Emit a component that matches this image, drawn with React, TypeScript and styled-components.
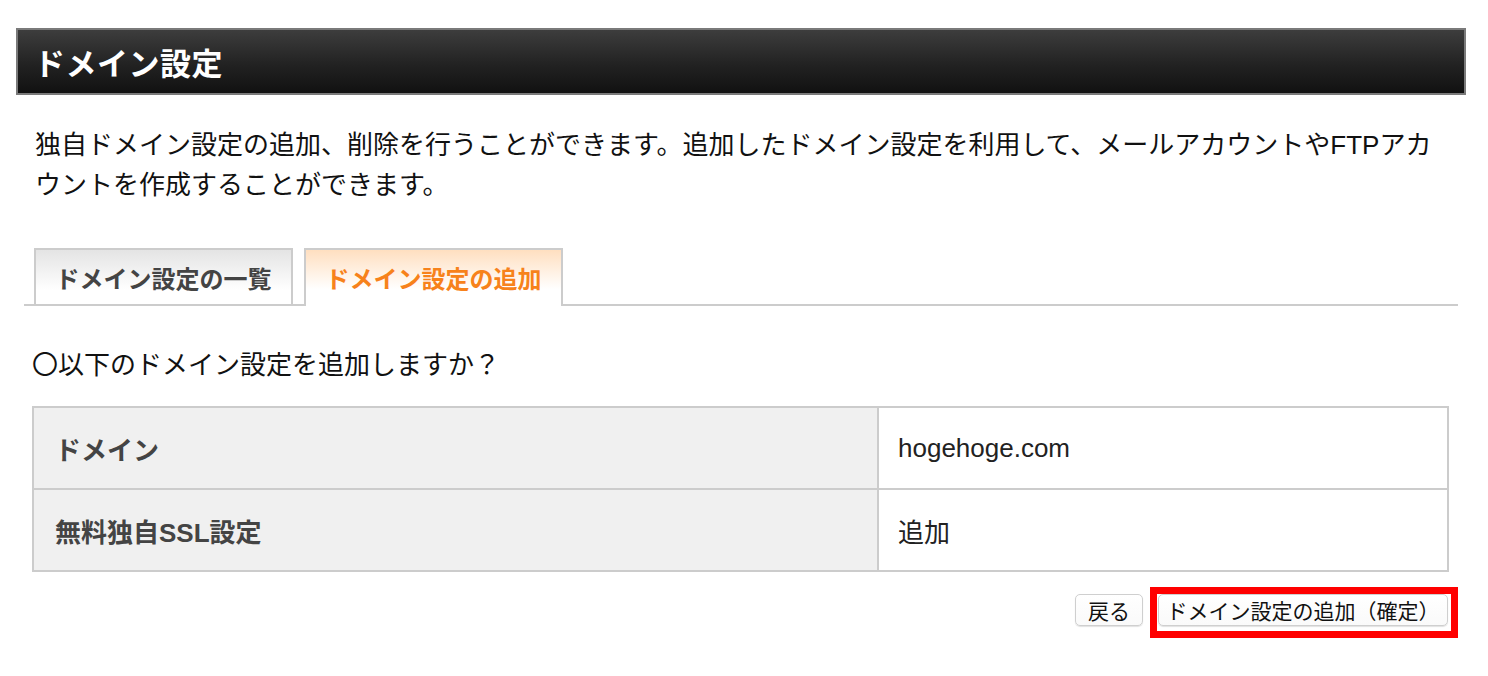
import React from 'react';
import styled, { createGlobalStyle } from 'styled-components';

const GlobalStyle = createGlobalStyle`
  html, body {
    margin: 0;
    padding: 0;
    background: #fff;
  }
  body {
    font-family: "Liberation Sans", "Noto Sans CJK JP", sans-serif;
    color: #111;
  }
`;

const Page = styled.div`
  padding: 28px 22px 40px 16px;
`;

const TitleBar = styled.h1`
  margin: 0;
  height: 63px;
  display: flex;
  align-items: center;
  padding-left: 16px;
  border: 2px solid #7a7a7a;
  background: linear-gradient(to bottom, #3d3d3d 0%, #222 55%, #111 100%);
  color: #fff;
  font-size: 31px;
  font-weight: 700;
  letter-spacing: 0.5px;
`;

const Description = styled.p`
  margin: 30px 0 0;
  padding: 0 22px 0 19px;
  font-size: 26px;
  line-height: 40px;
  color: #111;
`;

const TabBar = styled.div`
  display: flex;
  gap: 11px;
  margin: 43px 8px 0;
  padding-left: 10px;
  border-bottom: 2px solid #ccc;
`;

const Tab = styled.div<{ $active?: boolean }>`
  width: 259px;
  box-sizing: border-box;
  display: flex;
  align-items: center;
  justify-content: center;
  border: 2px solid #ccc;
  border-bottom: none;
  margin-bottom: ${({ $active }) => ($active ? '-2px' : '0')};
  height: ${({ $active }) => ($active ? '58px' : '56px')};
  padding-bottom: ${({ $active }) => ($active ? '2px' : '0')};
  background: ${({ $active }) =>
    $active
      ? 'linear-gradient(to bottom, #ffdfc0 0%, #fff 70%)'
      : 'linear-gradient(to bottom, #e4e4e4 0%, #fff 75%)'};
  color: ${({ $active }) => ($active ? '#f7821b' : '#444')};
  font-size: 24px;
  font-weight: 700;
`;

const Question = styled.p`
  margin: 39px 0 0 16px;
  font-size: 26px;
  line-height: 40px;
  color: #111;
`;

const InfoTable = styled.table`
  margin: 21px 0 0 16px;
  width: 1417px;
  border-collapse: collapse;
  border: 2px solid #ccc;
`;

const HeadCell = styled.th`
  width: 845px;
  height: 82px;
  box-sizing: border-box;
  padding: 0 0 0 21px;
  text-align: left;
  vertical-align: middle;
  background: #f0f0f0;
  border: 2px solid #ccc;
  color: #444;
  font-size: 26px;
  font-weight: 700;
`;

const ValueCell = styled.td`
  height: 82px;
  box-sizing: border-box;
  padding: 0 0 0 19px;
  vertical-align: middle;
  border: 2px solid #ccc;
  font-size: 26px;
  color: #222;
`;

const Actions = styled.div`
  display: flex;
  justify-content: flex-end;
  align-items: flex-start;
  gap: 7px;
  margin: 15px 8px 0 0;
`;

const Highlight = styled.div`
  border: 7px solid #f00;
  padding: 0 3px 5px 1px;
`;

const Button = styled.button<{ $wide?: boolean }>`
  height: 32px;
  box-sizing: border-box;
  margin-top: 7px;
  padding: 0;
  width: ${({ $wide }) => ($wide ? '290px' : '68px')};
  background: linear-gradient(to bottom, #fff 0%, #fafafa 100%);
  border: 1px solid #cfcfcf;
  border-radius: 5px;
  box-shadow: 0 1px 1px rgba(0, 0, 0, 0.12);
  font-family: "Liberation Sans", "Noto Sans CJK JP", sans-serif;
  font-size: 21px;
  color: #111;
  cursor: pointer;
  white-space: nowrap;

  ${Highlight} & {
    margin-top: 0;
  }
`;

export default function App() {
  return (
    <Page>
      <GlobalStyle />
      <TitleBar>ドメイン設定</TitleBar>
      <Description>
        独自ドメイン設定の追加、削除を行うことができます。追加したドメイン設定を利用して、メールアカウントやFTPアカウントを作成することができます。
      </Description>
      <TabBar>
        <Tab>ドメイン設定の一覧</Tab>
        <Tab $active>ドメイン設定の追加</Tab>
      </TabBar>
      <Question>〇以下のドメイン設定を追加しますか？</Question>
      <InfoTable>
        <tbody>
          <tr>
            <HeadCell>ドメイン</HeadCell>
            <ValueCell>hogehoge.com</ValueCell>
          </tr>
          <tr>
            <HeadCell>無料独自SSL設定</HeadCell>
            <ValueCell>追加</ValueCell>
          </tr>
        </tbody>
      </InfoTable>
      <Actions>
        <Button>戻る</Button>
        <Highlight>
          <Button $wide>ドメイン設定の追加（確定）</Button>
        </Highlight>
      </Actions>
    </Page>
  );
}
